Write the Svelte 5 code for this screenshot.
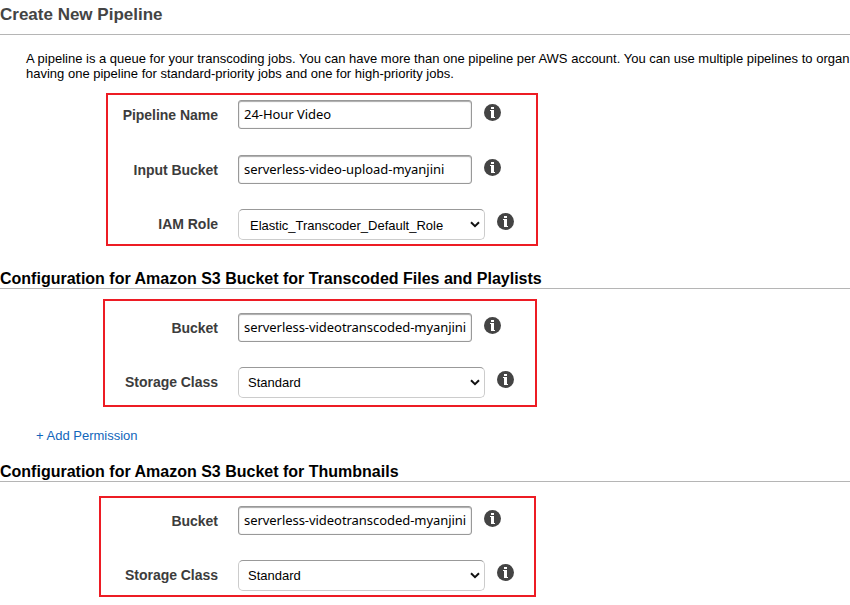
<script>
  let name = '24-Hour Video';
  let inputBucket = 'serverless-video-upload-myanjini';
  let role = 'Elastic_Transcoder_Default_Role';

  let outputs = [
    {
      id: 'files',
      title: 'Configuration for Amazon S3 Bucket for Transcoded Files and Playlists',
      bucket: 'serverless-videotranscoded-myanjini',
      storage: 'Standard',
      permissions: true
    },
    {
      id: 'thumbs',
      title: 'Configuration for Amazon S3 Bucket for Thumbnails',
      bucket: 'serverless-videotranscoded-myanjini',
      storage: 'Standard',
      permissions: false
    }
  ];
</script>

{#snippet info()}
  <svg class="info" width="17" height="17" viewBox="0 0 17 17">
    <circle cx="8.5" cy="8.5" r="8.5" fill="#444" />
    <path d="M7 3h3v2H7zM6 6h4v7h1v1H7V7H6z" fill="#fff" />
  </svg>
{/snippet}

{#snippet chevron()}
  <svg class="chevron" width="10" height="7" viewBox="0 0 10 7">
    <path d="M1 1.2l4 3.9 4-3.9" fill="none" stroke="#111" stroke-width="2" />
  </svg>
{/snippet}

<main>
  <h1>Create New Pipeline</h1>

  <p class="description">
    A pipeline is a queue for your transcoding jobs. You can have more than one pipeline per AWS account. You can use multiple pipelines to organ<br />
    having one pipeline for standard-priority jobs and one for high-priority jobs.
  </p>

  <div class="group general">
    <div class="row">
      <label for="name">Pipeline Name</label>
      <input id="name" type="text" bind:value={name} />
      {@render info()}
    </div>
    <div class="row">
      <label for="input-bucket">Input Bucket</label>
      <input id="input-bucket" type="text" bind:value={inputBucket} />
      {@render info()}
    </div>
    <div class="row">
      <label for="role">IAM Role</label>
      <button id="role" class="select role">
        <span>{role}</span>
        {@render chevron()}
      </button>
      {@render info()}
    </div>
  </div>

  {#each outputs as o}
    <h2>{o.title}</h2>
    <div class="group {o.id}">
      <div class="row">
        <label for="{o.id}-bucket">Bucket</label>
        <input id="{o.id}-bucket" type="text" bind:value={o.bucket} />
        {@render info()}
      </div>
      <div class="row">
        <label for="{o.id}-storage">Storage Class</label>
        <button id="{o.id}-storage" class="select">
          <span>{o.storage}</span>
          {@render chevron()}
        </button>
        {@render info()}
      </div>
    </div>
    {#if o.permissions}
      <a class="add" href="#add">+ Add Permission</a>
    {/if}
  {/each}
</main>

<style>
  :global(body) {
    background: #fff;
    overflow: hidden;
  }

  main {
    height: 605px;
    overflow: hidden;
    font-family: "Liberation Sans", Arial, sans-serif;
    font-size: 13px;
    color: #000;
  }

  h1 {
    box-sizing: border-box;
    height: 35px;
    margin: 0;
    padding-top: 5px;
    border-bottom: 1px solid #b5b5b5;
    font-size: 17px;
    line-height: 19px;
    color: #444;
  }

  .description {
    height: 30px;
    margin: 16px 0 12px 26px;
    line-height: 15px;
    white-space: nowrap;
  }

  h2 {
    box-sizing: border-box;
    height: 20px;
    margin: 0;
    border-bottom: 1px solid #b5b5b5;
    font-size: 16px;
    line-height: 19px;
    white-space: nowrap;
  }

  .group {
    box-sizing: border-box;
    display: flex;
    flex-direction: column;
    gap: 25px;
    border: 2px solid #ed1c24;
  }

  .general {
    width: 432px;
    height: 153px;
    margin: 0 0 23px 106px;
    padding: 5px 0 0 10px;
  }

  .files {
    width: 434px;
    height: 108px;
    margin: 10px 0 0 103px;
    padding: 12px 0 0 13px;
  }

  .thumbs {
    width: 437px;
    height: 101px;
    margin: 14px 0 0 99px;
    padding: 8px 0 0 17px;
  }

  .row {
    display: flex;
    align-items: flex-start;
    height: 29px;
  }

  .general .row:first-child {
    height: 30px;
  }

  label {
    width: 100px;
    margin-right: 20px;
    text-align: right;
    font-size: 14px;
    font-weight: bold;
    line-height: 31px;
    letter-spacing: -0.03px;
    color: #3c3c3c;
    white-space: nowrap;
  }

  input {
    box-sizing: border-box;
    width: 234px;
    height: 29px;
    margin: 0;
    padding: 0 5px 2px;
    border: 1px solid #999;
    border-radius: 3px;
    box-shadow: inset 0 1px 1px #aaa, inset 0 0 1px #aaa;
    font-family: "Noto Sans", sans-serif;
    font-size: 13px;
    letter-spacing: -0.05px;
    outline: none;
  }

  .select {
    box-sizing: border-box;
    display: flex;
    align-items: center;
    justify-content: space-between;
    width: 247px;
    height: 31px;
    padding: 0 4px 0 9px;
    border: 1px solid #ccc;
    border-top-color: #999;
    border-radius: 5px;
    background: #fff;
    font-family: inherit;
    font-size: 13px;
    color: #000;
  }

  .role {
    padding-left: 11px;
  }

  .role span {
    padding-top: 2px;
  }

  .info {
    margin: 4px 0 0 12px;
  }

  .add {
    display: block;
    height: 15px;
    margin: 21px 0 19px 36px;
    line-height: 15px;
    color: #1166bb;
    text-decoration: none;
  }
</style>
